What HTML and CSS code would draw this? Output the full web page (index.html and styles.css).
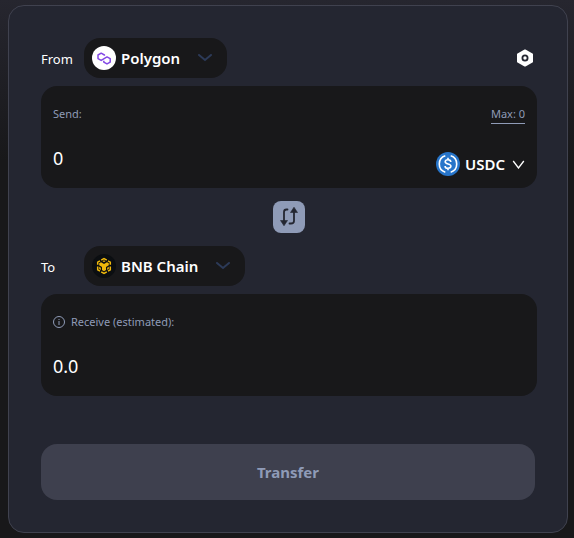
FILE: index.html
```html
<!DOCTYPE html>
<html lang="en">
<head>
<meta charset="utf-8">
<meta name="viewport" content="width=device-width, initial-scale=1">
<title>Bridge</title>
<link rel="stylesheet" href="styles.css">
</head>
<body>
<main class="card">
  <div class="chain-row">
    <span class="chain-label">From</span>
    <button class="chain" type="button">
      <svg class="token" viewBox="0 0 24 24" aria-hidden="true"><circle cx="12" cy="12" r="12" fill="#fff"/><g fill="none" stroke="#8247e5" stroke-width="1.5" stroke-linejoin="round"><path d="M12.400 9.700V9L9.200 7.200 6 9v3.600l3.200 1.800 5.800-3.500 3.200 1.800v3.400L15 17.900l-3.200-1.800v-1.300"/></g></svg>
      <span class="chain-name">Polygon</span>
      <svg class="chevron" viewBox="0 0 14 8" aria-hidden="true"><path d="M1 1l6 5 6-5"/></svg>
    </button>
    <button class="settings" type="button" aria-label="Settings">
      <svg viewBox="0 0 18 18" aria-hidden="true"><path d="M9 1.500 16 5.300v7.400L9 16.500 2 12.700V5.300z" fill="#fff" stroke="#fff" stroke-width="2" stroke-linejoin="round"/><circle cx="9" cy="9" r="2.600" fill="none" stroke="#242631" stroke-width="1.800"/></svg>
    </button>
  </div>

  <section class="panel">
    <div class="panel-row">
      <label class="caption" for="send">Send:</label>
      <button class="max" type="button">Max: 0</button>
    </div>
    <div class="panel-row amount-row">
      <input class="amount" id="send" type="text" inputmode="decimal" value="0">
      <button class="asset" type="button">
        <svg class="token" viewBox="0 0 24 24" aria-hidden="true"><circle cx="12" cy="12" r="12" fill="#2775ca"/><g fill="none" stroke="#fff" stroke-width="1.600"><path d="M9.300 3.800a8.600 8.600 0 0 0 0 16.400M14.700 3.800a8.600 8.600 0 0 1 0 16.400"/><path d="M14.800 10c0-1.500-1.100-2.300-2.800-2.300S9.200 8.500 9.200 9.800c0 3 5.700 1.300 5.700 4.300 0 1.400-1.200 2.200-2.900 2.200s-2.900-.9-2.900-2.400M12 5.800v2M12 16.200v2"/></g></svg>
        <span>USDC</span>
        <svg class="caret" viewBox="0 0 12 9" aria-hidden="true"><path d="M.7 1 6 8l5.300-7"/></svg>
      </button>
    </div>
  </section>

  <button class="swap" type="button" aria-label="Swap direction">
    <svg viewBox="0 0 20 20" aria-hidden="true"><g fill="none" stroke="#242631" stroke-width="1.800" stroke-linecap="round"><path d="M8.500 2.500H7.500Q5 2.500 5 5V14M10.500 16.500h1.500Q15 16.500 15 14V5"/></g><path d="M1.500 13.500h7L5 18.800zM11.500 5.500h7L15 .2z" fill="#242631" stroke="#242631" stroke-width=".6" stroke-linejoin="round"/></svg>
  </button>

  <div class="chain-row">
    <span class="chain-label">To</span>
    <button class="chain" type="button">
      <svg class="token" viewBox="0 0 24 24" aria-hidden="true"><circle cx="12" cy="12" r="12" fill="#0b0e11"/><g fill="none" stroke="#f0b90b" stroke-width="1.500"><path d="M9.200 6.200 12 4.600l2.800 1.600M16 6.800l2.300 1.300v2.700M18.300 12.500v3.400L16 17.200M14.800 17.900 12 19.500l-2.800-1.600M8 17.200l-2.300-1.300v-3.400M5.700 10.800V8.100L8 6.800"/></g><path d="M7.200 9.200 9 8.200l3 1.700 3-1.700 1.800 1v2L14 12.900v3.200l-2 1.200-2-1.200v-3.200l-2.800-1.700zM12 6.300l1.500.9-1.500.9-1.500-.9zM7.200 12.800l1.600.9V16l-1.600-.9zM16.800 12.800l-1.600.9V16l1.600-.9z" fill="#f0b90b"/></svg>
      <span class="chain-name">BNB Chain</span>
      <svg class="chevron" viewBox="0 0 14 8" aria-hidden="true"><path d="M1 1l6 5 6-5"/></svg>
    </button>
  </div>

  <section class="panel">
    <div class="panel-row">
      <label class="caption" for="receive">
        <svg class="info" viewBox="0 0 12 12" aria-hidden="true"><circle cx="6" cy="6" r="5.500"/><path d="M6 5v4M6 3v1"/></svg>
        Receive (estimated):
      </label>
    </div>
    <div class="panel-row amount-row">
      <input class="amount" id="receive" type="text" value="0.0" readonly>
    </div>
  </section>

  <button class="transfer" type="button">Transfer</button>
</main>
</body>
</html>
```
FILE: styles.css
```css
* {
  box-sizing: border-box;
}

body {
  margin: 0;
  padding: 5px 6px 5px 8px;
  background: linear-gradient(#26262f, #18181a 160px);
  color: #fff;
  font: 14px/20px "Noto Sans", sans-serif;
}

button,
input {
  margin: 0;
  padding: 0;
  border: 0;
  background: none;
  color: inherit;
  font: inherit;
}

button {
  cursor: pointer;
}

svg {
  display: block;
  flex: none;
}

.card {
  display: flex;
  flex-direction: column;
  padding: 32px 30px 32px 32px;
  border: 1px solid #40424f;
  border-radius: 16px;
  background: #242631;
}

.chain-row {
  display: flex;
  align-items: center;
  margin-bottom: 8px;
}

.chain-label {
  width: 43px;
  padding-top: 2px;
  font-size: 13px;
}

.chain {
  display: flex;
  align-items: center;
  height: 40px;
  padding: 0 15px 0 8px;
  border-radius: 16px;
  background: #18181a;
  font-size: 15px;
  font-weight: 600;
}

.token {
  width: 24px;
  height: 24px;
}

.chain-name {
  margin: 0 18px 0 5px;
}

.chevron {
  width: 14px;
  height: 8px;
  fill: none;
  stroke: #2c3a58;
  stroke-width: 2;
  stroke-linecap: round;
}

.settings {
  margin: 0 3px 0 auto;
}

.settings svg {
  width: 18px;
  height: 18px;
}

.panel {
  height: 102px;
  padding: 18px 12px 12px;
  border-radius: 16px;
  background: #18181a;
}

.panel-row {
  display: flex;
  align-items: center;
  justify-content: space-between;
}

.caption {
  display: flex;
  align-items: center;
  gap: 6px;
  color: #8f9bb7;
  font-size: 11px;
}

.max {
  border-bottom: 1px solid #8f9bb7;
  color: #8f9bb7;
  font-size: 11px;
  line-height: 19px;
}

.amount-row {
  margin-top: 22px;
  height: 24px;
}

.amount {
  flex: 1;
  min-width: 0;
  font-size: 18px;
  line-height: 24px;
  outline: none;
}

.asset {
  display: flex;
  align-items: center;
  margin-top: 12px;
  font-size: 15px;
  font-weight: 600;
}

.asset span {
  margin: 0 7px 0 5px;
}

.caret {
  width: 13px;
  height: 9px;
  fill: none;
  stroke: #fff;
  stroke-width: 1.3;
}

.info {
  width: 12px;
  height: 12px;
  fill: none;
  stroke: #8f9bb7;
}

.swap {
  display: flex;
  align-items: center;
  justify-content: center;
  align-self: center;
  width: 32px;
  height: 32px;
  margin: 13px 0;
  border-radius: 8px;
  background: #8f9bb7;
}

.swap svg {
  width: 20px;
  height: 20px;
}

.transfer {
  height: 56px;
  margin: 48px 2px 0 0;
  border-radius: 16px;
  background: #3e404e;
  color: #8f9bb7;
  font-size: 15px;
  font-weight: 700;
}
```
